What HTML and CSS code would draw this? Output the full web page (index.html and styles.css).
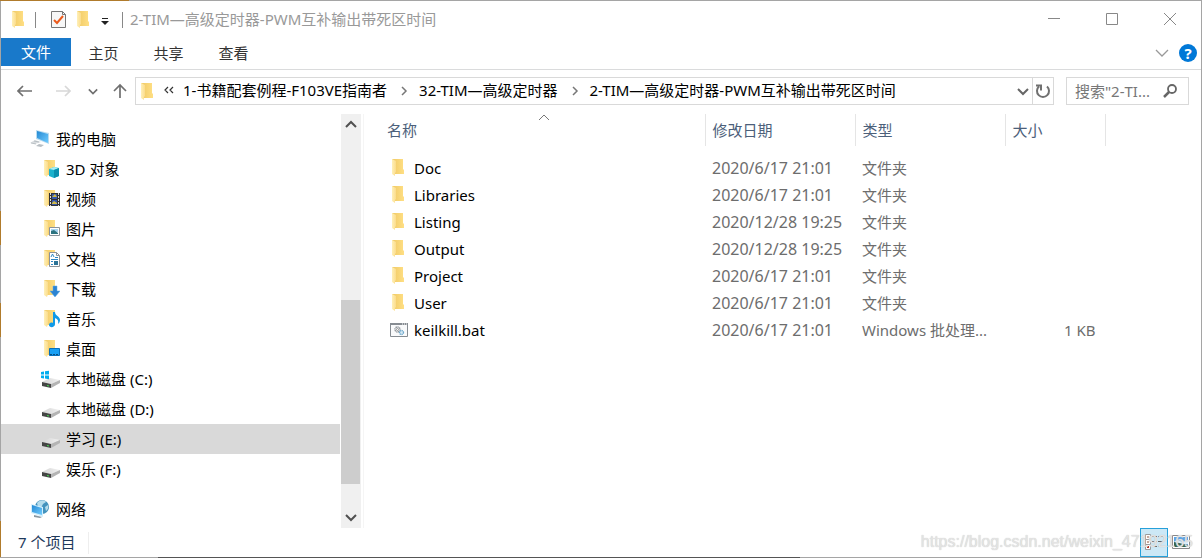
FILE: index.html
```html
<!DOCTYPE html>
<html lang="zh-CN">
<head>
    <meta charset="UTF-8">
    <meta name="viewport" content="width=device-width, initial-scale=1.0">
    <title>2-TIM—高级定时器-PWM互补输出带死区时间</title>
    <link rel="stylesheet" href="styles.css">
</head>
<body>
    <!-- 图标 -->
    <svg class="sprite" aria-hidden="true">
        <defs>
            <linearGradient id="gold" x1="0" x2="1"><stop offset="0" stop-color="#efc965"/><stop offset="1" stop-color="#ffdf84"/></linearGradient>
            <linearGradient id="flap" x1="0" x2="1"><stop offset="0" stop-color="#fff0b8"/><stop offset="1" stop-color="#fbdc8b"/></linearGradient>
            <linearGradient id="screen" x1="0" y1="0" x2="1" y2="1"><stop offset="0" stop-color="#2589d3"/><stop offset="1" stop-color="#6ecbff"/></linearGradient>
            <linearGradient id="metal" x1="0" x2="1"><stop offset="0" stop-color="#d5d5d5"/><stop offset="1" stop-color="#f1f1f1"/></linearGradient>
        </defs>
        <symbol id="folder" viewBox="0 0 12 17">
            <path d="M0 0h11v10l1 1v4H3z" fill="url(#gold)"/>
            <path d="M0 0l4 2v11l-1 1v3l-3-2z" fill="url(#flap)"/>
        </symbol>
        <symbol id="base" viewBox="0 0 20 20">
            <path d="M4 1h11v15H7z" fill="url(#gold)"/>
            <path d="M4 1l4 2v12l-1 3-3-2z" fill="url(#flap)"/>
        </symbol>
        <symbol id="pc" viewBox="0 0 20 20">
            <path d="M6 1l13 3v11L6 10z" fill="#b9dcf0"/>
            <path d="M7 2l11 3v9L7 9z" fill="url(#screen)"/>
            <path d="M5 11l6 2-6 2-5-1z" fill="#d9dde0"/>
            <path d="M9 15l5 1-3 2-5-1z" fill="#b8bec3"/>
            <path d="M1 14l5 1M4 12l5 1" stroke="#a8b0b6" stroke-width=".7"/>
        </symbol>
        <symbol id="cube" viewBox="0 0 20 20">
            <use href="#base"/>
            <path d="M9 10l5-2 5 1v8l-5 2-5-2z" fill="#1bb1cc"/>
            <path d="M9 10l5-2 5 1-5 2z" fill="#a8edf4"/>
            <path d="M14 11l5-2v8l-5 2z" fill="#0a8fae"/>
        </symbol>
        <symbol id="video" viewBox="0 0 20 20">
            <use href="#base"/>
            <path d="M9 4h11v13H9z" fill="#333"/>
            <path d="M12 5h5v5h-5zM12 11h5v5h-5z" fill="#3457ad"/>
            <path d="M12 8l3-3 2 3zM12 14l2-2 3 2v1h-5z" fill="#d1ba4a"/>
            <path d="M10.500 4v13M18.500 4v13" stroke="#ddd" stroke-dasharray="2 1"/>
        </symbol>
        <symbol id="picture" viewBox="0 0 20 20">
            <use href="#base"/>
            <path d="M9.500 8.500h10v8h-10z" fill="#fff" stroke="#8c9399"/>
            <path d="M11 10h7v3h-7z" fill="#a7d5f1"/>
            <path d="M11 12l3-1 4 3v1h-7z" fill="#2d7480"/>
        </symbol>
        <symbol id="document" viewBox="0 0 20 20">
            <use href="#base"/>
            <path d="M9.500 3.500h7l3 3v11h-10z" fill="#fff" stroke="#8c9399"/>
            <path d="M16.500 3.500v3h3" fill="none" stroke="#8c9399"/>
            <path d="M11 8l1.500-3 1.500 3M15 8.500h3M11 10.500h7M11 12.500h2M11 15.500h2" fill="none" stroke="#2f87c4"/>
            <path d="M14 12h4v4h-4z" fill="#2c7397"/>
        </symbol>
        <symbol id="download" viewBox="0 0 20 20">
            <use href="#base"/>
            <path d="M13 7h4v5h3l-5 6-5-6h3z" fill="#2c83d2" stroke="#5ba8e5" stroke-width=".5"/>
        </symbol>
        <symbol id="music" viewBox="0 0 20 20">
            <use href="#base"/>
            <path d="M13 3h2c0 4 5 4 5 8 0 2-1 3-2 4 1-4-1-5-3-6v6c0 4-6 4-6 1 0-2 2-3 4-2z" fill="#109ae8"/>
        </symbol>
        <symbol id="desktop" viewBox="0 0 20 20">
            <use href="#base"/>
            <path d="M9.500 9.500h10v7h-10z" fill="#1aa0f4" stroke="#0870bb"/>
            <path d="M10 15.500h9" stroke="#075083" stroke-dasharray="2 1"/>
        </symbol>
        <symbol id="drive" viewBox="0 0 20 20">
            <path d="M2 13l8-4 10 2-9 4z" fill="url(#metal)"/>
            <path d="M2 13l9 2v4l-9-2z" fill="#454545"/>
            <path d="M11 15l9-4v3l-9 5z" fill="#b4b4b4"/>
            <path d="M7 16l2 .5v1L7 17z" fill="#42db4d"/>
        </symbol>
        <symbol id="system" viewBox="0 0 20 20">
            <use href="#drive"/>
            <path d="M1 3l3-.500v3H1zM5 2.300l4-.600v3.800H5zM1 6.500h3v3L1 9zM5 6.500h4v3.700l-4-.600z" fill="#00adef"/>
        </symbol>
        <symbol id="network" viewBox="0 0 20 20">
            <circle cx="12" cy="8" r="7" fill="#4292bd"/>
            <path d="M7 4c3-4 8-3 9-1l-3 2-2 4-3-1zM15 8l3-2c1 4-1 5-2 6z" fill="#b4dcec"/>
            <path d="M1 5l12 3v10L1 14z" fill="#d2effd"/>
            <path d="M2 6l10 3v7L2 13z" fill="url(#screen)"/>
            <path d="M4 16l8 2-2 1-6-1z" fill="#8897a1"/>
        </symbol>
        <symbol id="bat" viewBox="0 0 18 15">
            <path d="M.500.500h17v13H.500z" fill="#f9fafb" stroke="#868c92"/>
            <path d="M0 0h18v2H0z" fill="#868c92"/>
            <path d="M12 1h1M14 1h1M16 1h1" stroke="#fff"/>
            <circle cx="7.500" cy="6.500" r="2.500" fill="none" stroke="#8c9298" stroke-width="1.500" stroke-dasharray="1.300 .6"/>
            <circle cx="7.500" cy="6.500" r="1" fill="none" stroke="#777" stroke-width=".7"/>
            <circle cx="11.500" cy="9.500" r="2" fill="#d6e9f4" stroke="#70a9cc" stroke-width="1.300" stroke-dasharray="1.200 .5"/>
        </symbol>
        <symbol id="down" viewBox="0 0 12 12"><path d="M1 4l5 5 5-5" fill="none" stroke="currentColor" stroke-width="2"/></symbol>
        <symbol id="thin" viewBox="0 0 14 14"><path d="M1 4l6 6 6-6" fill="none" stroke="currentColor" stroke-width="1.300"/></symbol>
        <symbol id="up" viewBox="0 0 12 12"><path d="M1 8l5-5 5 5" fill="none" stroke="currentColor" stroke-width="2"/></symbol>
        <symbol id="right" viewBox="0 0 10 10"><path d="M3 1l4 4-4 4" fill="none" stroke="currentColor" stroke-width="1.500"/></symbol>
        <symbol id="arrow" viewBox="0 0 16 16"><path d="M6 3L1 8l5 5M1 8h14" fill="none" stroke="currentColor" stroke-width="1.700"/></symbol>
    </svg>

    <div class="window">
        <header class="titlebar">
            <svg class="folder"><use href="#folder"/></svg>
            <span class="divider"></span>
            <button class="quick" aria-label="属性">
                <svg width="15" height="19" viewBox="0 0 15 19"><path d="M.500 1.500h11l3 3v13H.500z" fill="#f7f7f7" stroke="#777"/><path d="M11.500 1.500v3h3" fill="none" stroke="#777"/><path d="M3 10l3 3 6-7" fill="none" stroke="#eb5a1c" stroke-width="2"/></svg>
            </button>
            <button class="quick" aria-label="新建文件夹"><svg class="folder"><use href="#folder"/></svg></button>
            <button class="quick customize" aria-label="自定义快速访问工具栏">
                <svg width="8" height="8" viewBox="0 0 8 8"><path d="M1 0h6v1H1zM0 3h8L4 7z" fill="#222"/></svg>
            </button>
            <span class="divider last"></span>
            <h1>2-TIM—高级定时器-PWM互补输出带死区时间</h1>
            <div class="window-buttons">
                <button aria-label="最小化"><svg width="12" height="12"><path d="M0 5.500h12" stroke="#888"/></svg></button>
                <button aria-label="最大化"><svg width="12" height="12"><path d="M.500.500h11v11H.500z" fill="none" stroke="#888"/></svg></button>
                <button aria-label="关闭"><svg width="12" height="12"><path d="M0 0l12 12M12 0L0 12" stroke="#888"/></svg></button>
            </div>
        </header>

        <nav class="ribbon">
            <button class="active">文件</button>
            <button>主页</button>
            <button>共享</button>
            <button>查看</button>
            <div class="ribbon-end">
                <button class="expand" aria-label="展开功能区"><svg width="14" height="14"><use href="#thin"/></svg></button>
                <button class="help" aria-label="帮助">?</button>
            </div>
        </nav>

        <div class="toolbar">
            <div class="history">
                <button aria-label="后退"><svg width="16" height="16"><use href="#arrow"/></svg></button>
                <button aria-label="前进" disabled><svg class="forward" width="16" height="16"><use href="#arrow"/></svg></button>
                <button class="recent" aria-label="最近浏览的位置"><svg width="10" height="10"><use href="#down"/></svg></button>
                <button class="parent" aria-label="上移"><svg width="16" height="16" viewBox="0 0 16 16"><path d="M2 8l6-6 6 6M8 2v13" fill="none" stroke="currentColor" stroke-width="1.700"/></svg></button>
            </div>
            <div class="address">
                <svg class="folder"><use href="#folder"/></svg>
                <svg class="more" width="10" height="10" viewBox="0 0 10 10"><path d="M4 1L1 4l3 3M9 1L6 4l3 3" fill="none" stroke="#333" stroke-width="1.200"/></svg>
                <button class="crumb">1-书籍配套例程-F103VE指南者</button>
                <svg class="sep"><use href="#right"/></svg>
                <button class="crumb">32-TIM—高级定时器</button>
                <svg class="sep"><use href="#right"/></svg>
                <button class="crumb">2-TIM—高级定时器-PWM互补输出带死区时间</button>
                <button class="dropdown" aria-label="以前的位置"><svg width="12" height="12"><use href="#down"/></svg></button>
                <button class="refresh" aria-label="刷新"><svg width="16" height="16" viewBox="0 0 16 16"><path d="M4 3.500a6 6 0 1 0 8 0M1 2.500h5v5" fill="none" stroke="currentColor" stroke-width="2"/></svg></button>
            </div>
            <div class="search">
                <input type="text" placeholder="搜索&quot;2-TI..." aria-label="搜索">
                <svg width="14" height="14" viewBox="0 0 14 14"><circle cx="9" cy="5" r="4" fill="none" stroke="#666" stroke-width="1.800"/><path d="M6 8l-5 5" stroke="#666" stroke-width="2.500"/></svg>
            </div>
        </div>

        <main>
            <nav class="tree">
                <a href="#" class="root"><svg><use href="#pc"/></svg>我的电脑</a>
                <a href="#"><svg><use href="#cube"/></svg>3D 对象</a>
                <a href="#"><svg><use href="#video"/></svg>视频</a>
                <a href="#"><svg><use href="#picture"/></svg>图片</a>
                <a href="#"><svg><use href="#document"/></svg>文档</a>
                <a href="#"><svg><use href="#download"/></svg>下载</a>
                <a href="#"><svg><use href="#music"/></svg>音乐</a>
                <a href="#"><svg><use href="#desktop"/></svg>桌面</a>
                <a href="#"><svg><use href="#system"/></svg>本地磁盘 (C:)</a>
                <a href="#"><svg><use href="#drive"/></svg>本地磁盘 (D:)</a>
                <a href="#" class="selected"><svg><use href="#drive"/></svg>学习 (E:)</a>
                <a href="#"><svg><use href="#drive"/></svg>娱乐 (F:)</a>
                <a href="#" class="root network"><svg><use href="#network"/></svg>网络</a>
            </nav>
            <div class="scrollbar">
                <button aria-label="向上滚动"><svg width="12" height="12"><use href="#up"/></svg></button>
                <div class="track"><div class="thumb"></div></div>
                <button aria-label="向下滚动"><svg width="12" height="12"><use href="#down"/></svg></button>
            </div>
            <section class="files">
                <table>
                    <thead>
                        <tr>
                            <th class="name">名称<svg class="sort" width="12" height="8" viewBox="0 0 12 8"><path d="M1 6l5-5 5 5" fill="none" stroke="#777"/></svg></th>
                            <th class="date">修改日期</th>
                            <th class="type">类型</th>
                            <th class="size">大小</th>
                        </tr>
                    </thead>
                    <tbody>
                        <tr>
                            <td><svg class="folder"><use href="#folder"/></svg>Doc</td>
                            <td>2020/6/17 21:01</td>
                            <td>文件夹</td>
                            <td></td>
                        </tr>
                        <tr>
                            <td><svg class="folder"><use href="#folder"/></svg>Libraries</td>
                            <td>2020/6/17 21:01</td>
                            <td>文件夹</td>
                            <td></td>
                        </tr>
                        <tr>
                            <td><svg class="folder"><use href="#folder"/></svg>Listing</td>
                            <td>2020/12/28 19:25</td>
                            <td>文件夹</td>
                            <td></td>
                        </tr>
                        <tr>
                            <td><svg class="folder"><use href="#folder"/></svg>Output</td>
                            <td>2020/12/28 19:25</td>
                            <td>文件夹</td>
                            <td></td>
                        </tr>
                        <tr>
                            <td><svg class="folder"><use href="#folder"/></svg>Project</td>
                            <td>2020/6/17 21:01</td>
                            <td>文件夹</td>
                            <td></td>
                        </tr>
                        <tr>
                            <td><svg class="folder"><use href="#folder"/></svg>User</td>
                            <td>2020/6/17 21:01</td>
                            <td>文件夹</td>
                            <td></td>
                        </tr>
                        <tr>
                            <td><svg class="bat"><use href="#bat"/></svg>keilkill.bat</td>
                            <td>2020/6/17 21:01</td>
                            <td>Windows 批处理...</td>
                            <td>1 KB</td>
                        </tr>
                    </tbody>
                </table>
            </section>
        </main>

        <footer class="status">
            <span class="count">7 个项目</span>
            <div class="views">
                <button class="active" aria-label="详细信息"><svg width="18" height="17" viewBox="0 0 18 17"><path d="M.500.500h5v5h-5zM.500 5.500h5v5h-5zM.500 10.500h5v5h-5z" fill="#fff" stroke="#999"/><path d="M2 2h2v2H2zM2 7h2v2H2z" fill="#c9a89a"/><path d="M2 12h2v2H2z" fill="#b52a21"/><path d="M7 2.500h5M13 2.500h5M7 7.500h5M13 7.500h5M7 12.500h5M13 12.500h5" stroke="#666"/></svg></button>
                <button aria-label="大缩略图"><svg width="18" height="15" viewBox="0 0 18 15"><path d="M.500.500h17v13H.500z" fill="#fff" stroke="#888"/><path d="M2 2h14v10H2z" fill="#5aa4e8"/><path d="M2 7c4-4 6 2 14-2v4H2z" fill="#dceffc"/><path d="M2 7l5 1 9 2v2H2z" fill="#31634f"/></svg></button>
            </div>
            <span class="watermark">https://blog.csdn.net/weixin_47192165</span>
        </footer>
    </div>
</body>
</html>
```
FILE: styles.css
```css
* {
    box-sizing: border-box;
}

body {
    margin: 0;
    padding: 1px;
    min-height: 100vh;
    display: flex;
    background: linear-gradient(to right, #b07b2c 129px, #a5a5a5 129px) top / 100% 1px no-repeat,
                linear-gradient(to right, #a5a5a5 158px, #555 158px, #555 800px, #a5a5a5 800px) bottom / 100% 1px no-repeat,
                linear-gradient(#a5a5a5 211px, #b07b2c 211px, #b07b2c 245px, #a5a5a5 245px, #a5a5a5 303px, #b07b2c 303px, #b07b2c 337px, #a5a5a5 337px, #a5a5a5 521px, #b07b2c 521px) left / 1px 100% no-repeat,
                #a5a5a5;
    font-family: "Noto Sans", "Noto Sans CJK SC", sans-serif;
    font-size: 15px;
    line-height: 20px;
    color: #000;
}

button {
    display: flex;
    align-items: center;
    justify-content: center;
    padding: 0;
    border: 0;
    background: none;
    font: inherit;
    color: inherit;
}

svg {
    flex: none;
}

.sprite {
    position: absolute;
    width: 0;
    height: 0;
}

.folder {
    width: 12px;
    height: 17px;
}

.window {
    flex: 1;
    min-width: 0;
    display: flex;
    flex-direction: column;
    background: #fff;
}

/* 标题栏 */
.titlebar {
    display: flex;
    align-items: center;
    height: 37px;
    padding-left: 11px;
}

.divider {
    width: 1px;
    height: 16px;
    margin: 0 15px 0 11px;
    background: #888;
}

.divider.last {
    margin: 0 7px 0 13px;
}

.quick {
    margin-right: 11px;
}

.quick.customize {
    margin: 4px 0 0 1px;
}

h1 {
    margin: 0;
    padding-bottom: 2px;
    font-size: 15px;
    font-weight: normal;
    color: #999;
}

.window-buttons {
    display: flex;
    margin: 0 2px 2px auto;
}

.window-buttons button {
    width: 58px;
    height: 35px;
}

/* 功能区 */
.ribbon {
    display: flex;
    height: 32px;
    border-bottom: 1px solid #dadbdc;
    color: #333;
}

.ribbon button {
    width: 65px;
    height: 30px;
}

.ribbon .active {
    width: 70px;
    height: 28px;
    background: #1979ca;
    color: #fff;
}

.ribbon-end {
    display: flex;
    align-items: center;
    gap: 10px;
    margin-left: auto;
    padding: 0 4px 2px 0;
}

.ribbon .expand {
    width: 14px;
    color: #999;
}

.ribbon .help {
    width: 18px;
    height: 18px;
    border-radius: 50%;
    background: #0078d7;
    color: #fff;
    font-weight: bold;
}

/* 地址栏 */
.toolbar {
    display: flex;
    height: 44px;
    padding: 7px 12px 9px 16px;
}

.history {
    display: flex;
    align-items: center;
    width: 118px;
    color: #707070;
}

.history button {
    margin-right: 22px;
}

.history button:disabled {
    color: #d8d8d8;
}

.forward {
    transform: scaleX(-1);
}

.history .recent {
    margin: 0 14px 0 -5px;
}

.history .parent {
    margin: 0;
}

.address {
    flex: 1;
    min-width: 0;
    display: flex;
    align-items: center;
    border: 1px solid #d9d9d9;
    padding-left: 5px;
    white-space: nowrap;
}

.crumb {
    padding-bottom: 2px;
}

.more {
    margin: 0 9px 0 11px;
}

.sep {
    width: 10px;
    height: 10px;
    margin: 0 10px 0 12px;
    color: #777;
}

.dropdown {
    margin: 0 3px 0 auto;
    color: #666;
}

.refresh {
    width: 21px;
    height: 26px;
    border-left: 1px solid #d9d9d9;
    color: #707070;
}

.search {
    display: flex;
    align-items: center;
    width: 123px;
    margin-left: 12px;
    padding: 0 11px 0 8px;
    border: 1px solid #d9d9d9;
}

.search input {
    flex: 1;
    min-width: 0;
    padding: 0;
    border: 0;
    outline: 0;
    background: none;
    font: inherit;
}

.search input::placeholder {
    color: #777;
    opacity: 1;
}

/* 主体 */
main {
    flex: 1;
    display: flex;
}

.tree {
    width: 340px;
    padding: 10px 1px 0 0;
}

.tree a {
    display: flex;
    align-items: center;
    height: 30px;
    padding-left: 39px;
    color: #000;
    text-decoration: none;
}

.tree svg {
    width: 20px;
    height: 20px;
    margin-right: 6px;
}

.tree .root {
    padding-left: 29px;
}

.tree .network {
    margin-top: 10px;
}

.tree .selected {
    background: #d9d9d9;
}

.scrollbar {
    display: flex;
    flex-direction: column;
    width: 20px;
    background: #f0f0f0;
    color: #505050;
}

.scrollbar button {
    height: 22px;
}

.track {
    flex: 1;
    display: flex;
    flex-direction: column;
    justify-content: flex-end;
    padding-bottom: 22px;
}

.thumb {
    height: 53%;
    background: #cdcdcd;
    margin-right: 1px;
}

.files {
    flex: 1;
    margin-left: 2px;
    border-left: 1px solid #f5f5f5;
}

table {
    table-layout: fixed;
    width: 742px;
    border-collapse: collapse;
}

th {
    position: relative;
    height: 32px;
    padding: 0 7px 1px;
    border-right: 1px solid #e5e5e5;
    font-weight: normal;
    text-align: left;
    color: #4c607a;
}

th.name {
    width: 341px;
    padding-left: 23px;
}

th.date,
th.type {
    width: 150px;
}

.sort {
    position: absolute;
    top: 0;
    left: 51%;
}

tbody::before {
    content: "";
    display: block;
    height: 8px;
}

td {
    height: 27px;
    padding: 0 0 0 7px;
    color: #6d6d6d;
    white-space: nowrap;
}

td:first-child {
    padding-left: 28px;
    color: #000;
}

td:nth-child(2) {
    font-size: 16px;
}

td:last-child {
    padding-right: 10px;
    text-align: right;
}

td svg {
    margin-right: 10px;
    vertical-align: -2px;
}

td .bat {
    width: 18px;
    height: 15px;
    margin: 0 6px 0 -2px;
}

/* 状态栏 */
.status {
    position: relative;
    display: flex;
    align-items: center;
    height: 29px;
    padding: 0 7px 0 17px;
    color: #1e395b;
}

.count {
    padding: 0 13px 2px 0;
    border-right: 1px solid #eee;
}

.views {
    display: flex;
    margin-left: auto;
}

.views button {
    width: 26px;
    height: 29px;
}

.views .active {
    width: 28px;
    border: 1px solid #26a0da;
    background: #cce8f6;
}

.watermark {
    position: absolute;
    right: 8px;
    padding-bottom: 2px;
    font-family: "Liberation Sans", Arial, sans-serif;
    font-size: 16px;
    color: rgba(232, 232, 232, .9);
    text-shadow: 0 0 1px #bbb;
}
```
